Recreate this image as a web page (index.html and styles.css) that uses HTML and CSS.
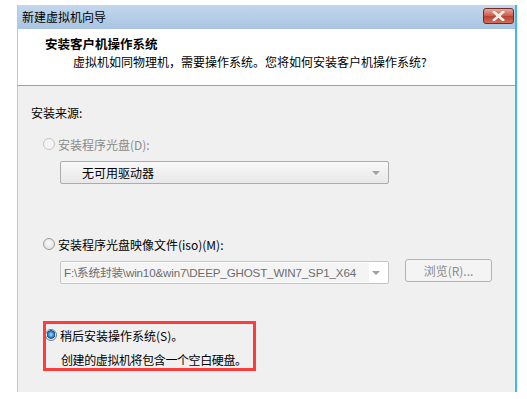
FILE: index.html
```html
<!DOCTYPE html>
<html lang="zh-CN">
<head>
<meta charset="utf-8">
<title>新建虚拟机向导</title>
<link rel="stylesheet" href="styles.css">
</head>
<body>
<div class="window">
  <div class="titlebar">
    <span class="title">新建虚拟机向导</span>
    <button class="close" aria-label="关闭">
      <svg width="13" height="10" viewBox="0 0 13 10"><path d="M2 1 L11 9 M11 1 L2 9" stroke="#fff" stroke-width="2.6" stroke-linecap="square"/><path d="M2 1 L11 9 M11 1 L2 9" stroke="#e9e9e9" stroke-width="1.4"/></svg>
    </button>
  </div>
  <div class="header">
    <div class="h-title">安装客户机操作系统</div>
    <div class="h-sub">虚拟机如同物理机，需要操作系统。您将如何安装客户机操作系统?</div>
  </div>
  <div class="content">
    <div class="label">安装来源:</div>
    <div class="option disabled">
      <span class="radio"></span><span>安装程序光盘(D):</span>
    </div>
    <div class="combo drive">
      <span class="combo-text">无可用驱动器</span>
      <span class="arrow"></span>
    </div>
    <div class="option opt2">
      <span class="radio"></span><span>安装程序光盘映像文件(iso)(M):</span>
    </div>
    <div class="row">
      <div class="combo iso">
        <span class="combo-text">F:\系统封装\win10&amp;win7\DEEP_GHOST_WIN7_SP1_X64</span>
        <span class="arrow"></span>
      </div>
      <button class="browse">浏览(R)...</button>
    </div>
    <div class="highlight">
      <div class="option checked">
        <span class="radio on"></span><span>稍后安装操作系统(S)。</span>
      </div>
      <div class="note">创建的虚拟机将包含一个空白硬盘。</div>
    </div>
  </div>
</div>
</body>
</html>
```
FILE: styles.css
```css
* { box-sizing: border-box; }
html, body { margin: 0; padding: 0; background: #fff; }
body {
  font-family: "Noto Sans CJK SC", "Microsoft YaHei", sans-serif;
  font-size: 12px;
  color: #000;
}
.window {
  margin: 5px 0 0 17px;
  width: 500px;
  height: 387px;
  display: flex;
  flex-direction: column;
  border-left: 1px solid #b7c9dc;
  border-right: 2px solid #3fb8ec;
}
.titlebar {
  height: 24px;
  display: flex;
  align-items: center;
  justify-content: space-between;
  padding: 0 1px 0 4px;
  background: linear-gradient(#c3d7ec, #a9c4e2);
}
.title { font-size: 12px; line-height: 16px; }
.close {
  width: 31px;
  height: 16px;
  margin-top: -3px;
  padding: 0;
  display: flex;
  align-items: center;
  justify-content: center;
  border: 1px solid #6e2b2b;
  border-radius: 3px;
  background: linear-gradient(#e6a79a, #cc5a47 50%, #b8402e 51%, #d0705c);
}
.header {
  height: 57px;
  background: #fff;
  border-bottom: 1px solid #a0a0a0;
  padding: 6px 0 0 27px;
}
.h-title { font-weight: bold; font-size: 12.5px; line-height: 18px; }
.h-sub { padding-left: 28px; line-height: 18px; }
.content {
  flex: 1;
  background: #f0f0f0;
  padding: 18px 0 0 13px;
}
.label { line-height: 18px; }
.option {
  display: flex;
  align-items: center;
  gap: 3px;
  height: 18px;
  margin-left: 12px;
}
.disabled { margin-top: 13px; color: #8a8a8a; }
.opt2 { margin-top: 51px; }
.radio {
  width: 12px;
  height: 12px;
  border-radius: 50%;
  border: 1px solid #9c9c9c;
  background: radial-gradient(circle at 50% 40%, #fafafa, #dcdcdc);
  flex: none;
}
.disabled .radio { border-color: #c4c4c4; background: #f4f4f4; }
.radio.on {
  border-color: #6a7a8c;
  background: radial-gradient(circle at 50% 45%, #9fdcff 0, #2a7fc8 3px, #0b4e8e 4px, #e8edf2 4.5px, #dfe6ed 6px);
}
.combo {
  position: relative;
  height: 23px;
  width: 329px;
  border: 1px solid #acacac;
  border-radius: 2px;
  background: linear-gradient(#f8f8f8, #e8e8e8);
  display: flex;
  align-items: center;
}
.drive { margin: 8px 0 0 29px; }
.drive .combo-text { padding-left: 21px; }
.arrow {
  position: absolute;
  right: 8px;
  top: 9px;
  width: 0;
  height: 0;
  border-left: 4px solid transparent;
  border-right: 4px solid transparent;
  border-top: 4px solid #a0a0a0;
}
.row {
  display: flex;
  align-items: flex-start;
  margin: 8px 0 0 29px;
  gap: 16px;
}
.iso { background: #fff; border-color: #c5c5c5; }
.iso .combo-text {
  padding-left: 3px;
  color: #6d6d6d;
  font-family: "Liberation Sans", "Noto Sans CJK SC", sans-serif;
  font-size: 11.6px;
  letter-spacing: -0.15px;
  white-space: nowrap;
  width: 308px;
  background: #f4f4f4;
  height: 19px;
  line-height: 19px;
}
.browse {
  margin-top: -2px;
  width: 87px;
  height: 23px;
  border: 1px solid #b2b2b2;
  border-radius: 3px;
  background: #f4f4f4;
  color: #8a8a8a;
  font-family: inherit;
  font-size: 12px;
  padding: 0;
}
.highlight {
  margin: 37px 0 0 12px;
  width: 213px;
  height: 50px;
  border: 3px solid #ff3c3c;
  padding-top: 2px;
}
.checked { margin-left: -1px; }
.note {
  margin: 7px 0 0 15px;
  line-height: 18px;
  white-space: nowrap;
  letter-spacing: -0.4px;
}
```
